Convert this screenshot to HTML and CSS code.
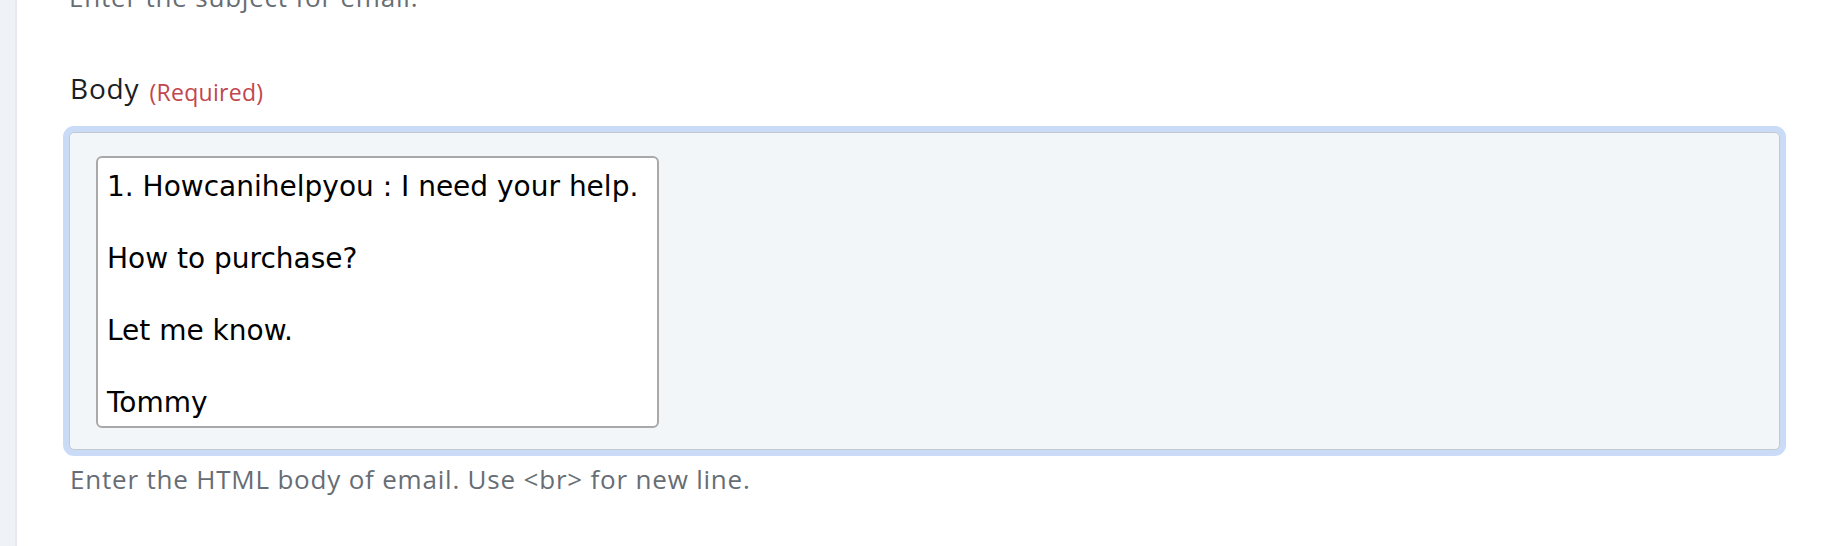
FILE: index.html
```html
<!DOCTYPE html>
<html lang="en">
<head>
<meta charset="utf-8">
<title>Email body</title>
<link rel="stylesheet" href="styles.css">
</head>
<body>
<div class="page">
  <aside class="rail"></aside>
  <main class="main">
    <p class="hint hint-top">Enter the subject for email.</p>
    <div class="field">
      <label class="label">Body <span class="required">(Required)</span></label>
      <div class="editor-shell">
        <div class="editor">
          <p>1. Howcanihelpyou : I need your help.</p>
          <p>How to purchase?</p>
          <p>Let me know.</p>
          <p>Tommy</p>
        </div>
      </div>
      <p class="hint hint-bottom">Enter the HTML body of email. Use &lt;br&gt; for new line.</p>
    </div>
  </main>
</div>
</body>
</html>
```

FILE: styles.css
```css
html, body {
  margin: 0;
  padding: 0;
  background: #ffffff;
  height: 100%;
  overflow: hidden;
}

.page {
  display: flex;
  min-height: 546px;
}

.rail {
  width: 15px;
  flex: 0 0 15px;
  background: #eff3f7;
  border-right: 2px solid #e5e9ee;
}

.main {
  flex: 1;
  padding: 0 50px 0 52px;
  font-family: "Open Sans", Lato, sans-serif;
}

.hint {
  margin: 0;
  font-size: 26px;
  line-height: 36px;
  letter-spacing: 0.8px;
  color: #676d74;
}

.hint-top {
  margin-top: -21px;
}

.field {
  margin-top: 53px;
}

.label {
  display: block;
  font-size: 28px;
  line-height: 40px;
  letter-spacing: 0.8px;
  color: #1b1e22;
  padding-left: 1px;
}

.required {
  font-size: 23px;
  line-height: 1;
  letter-spacing: 0.3px;
  color: #c2454e;
  margin-left: 2px;
  vertical-align: -2px;
}

.editor-shell {
  margin-top: 24px;
  background: #f3f6f9;
  border: 1px solid #c3c9d0;
  border-radius: 5px;
  box-shadow: 0 0 0 6px #cadbf8;
  padding: 23px 26px 21px;
}

.editor {
  box-sizing: border-box;
  width: 563px;
  background: #ffffff;
  border: 2px solid #a9a9a9;
  border-radius: 6px;
  padding: 11px 9px 5px;
  font-family: "DejaVu Sans", Verdana, sans-serif;
  font-size: 28px;
  line-height: 36px;
  color: #000000;
}

.editor p {
  margin: 36px 0 0;
}

.editor p:first-child {
  margin-top: 0;
}

.hint-bottom {
  margin-top: 11px;
  padding-left: 1px;
}
```
